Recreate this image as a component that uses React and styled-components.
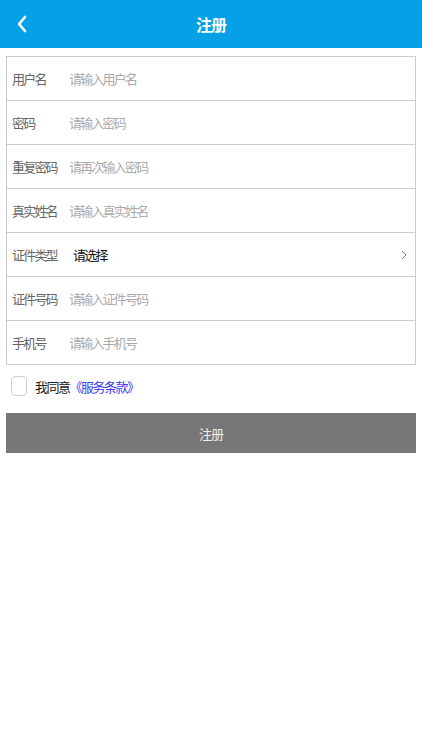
import React from 'react';
import styled, { createGlobalStyle } from 'styled-components';

const GlobalStyle = createGlobalStyle`
  html, body {
    margin: 0;
    padding: 0;
    background: #ffffff;
  }
  body {
    font-family: "Noto Sans CJK SC", "Liberation Sans", sans-serif;
  }
`;

const fields = [
  { label: '用户名', placeholder: '请输入用户名' },
  { label: '密码', placeholder: '请输入密码' },
  { label: '重复密码', placeholder: '请再次输入密码' },
  { label: '真实姓名', placeholder: '请输入真实姓名' },
  { label: '证件类型', select: '请选择' },
  { label: '证件号码', placeholder: '请输入证件号码' },
  { label: '手机号', placeholder: '请输入手机号' },
];

const App = () => {
  return (
    <Page>
      <GlobalStyle />
      <Header>
        <BackButton aria-label="返回">
          <svg width="12" height="18" viewBox="0 0 12 18" fill="none">
            <path d="M9 2L3 9l6 7" stroke="#fff" strokeWidth="2.6" strokeLinecap="round" strokeLinejoin="round" />
          </svg>
        </BackButton>
        <Title>注册</Title>
      </Header>

      <Form>
        {fields.map((f) => (
          <Row key={f.label}>
            <Label>{f.label}</Label>
            {f.select ? (
              <SelectValue>
                <span>{f.select}</span>
                <Chevron>
                  <svg width="6" height="10" viewBox="0 0 6 10" fill="none">
                    <path d="M1 1l4 4-4 4" stroke="#777" strokeWidth="1" />
                  </svg>
                </Chevron>
              </SelectValue>
            ) : (
              <Input placeholder={f.placeholder} />
            )}
          </Row>
        ))}
      </Form>

      <Agree>
        <Checkbox />
        <AgreeText>
          我同意<TermsLink>《服务条款》</TermsLink>
        </AgreeText>
      </Agree>

      <SubmitButton>注册</SubmitButton>
    </Page>
  );
};

const Page = styled.div`
  width: 422px;
  min-height: 750px;
  background: #fff;
`;

const Header = styled.div`
  height: 48px;
  background: #05a0e6;
  display: flex;
  align-items: center;
  justify-content: center;
  position: relative;
`;

const BackButton = styled.div`
  position: absolute;
  left: 16px;
  top: 15px;
  display: flex;
`;

const Title = styled.div`
  color: #fff;
  font-size: 16px;
  font-weight: 700;
  letter-spacing: -1px;
`;

const Form = styled.div`
  margin: 8px 6px 0;
  border: 1px solid #cccccc;
  border-bottom: none;
  display: flex;
  flex-direction: column;
`;

const Row = styled.div`
  height: 43px;
  border-bottom: 1px solid #cccccc;
  display: flex;
  align-items: center;
  padding-left: 5px;
  font-size: 13px;
  letter-spacing: -1.8px;
`;

const Label = styled.div`
  width: 57px;
  flex-shrink: 0;
  color: #666;
`;

const Input = styled.input`
  flex: 1;
  border: none;
  outline: none;
  background: transparent;
  font-family: inherit;
  font-size: inherit;
  letter-spacing: inherit;
  padding: 0;
  color: #333;
  &::placeholder {
    color: #ababab;
  }
`;

const SelectValue = styled.div`
  flex: 1;
  display: flex;
  align-items: center;
  justify-content: space-between;
  padding-left: 4px;
  padding-right: 8px;
  color: #111;
`;

const Chevron = styled.span`
  display: flex;
`;

const Agree = styled.div`
  display: flex;
  align-items: center;
  padding: 10px 11px 0;
  height: 22px;
`;

const Checkbox = styled.div`
  width: 14px;
  height: 18px;
  border: 1px solid #cfcfcf;
  border-radius: 4px;
  margin-right: 8px;
`;

const AgreeText = styled.div`
  font-size: 13px;
  letter-spacing: -1.5px;
  color: #222;
`;

const TermsLink = styled.span`
  color: #3b3bf0;
`;

const SubmitButton = styled.div`
  margin: 16px 6px 0;
  height: 40px;
  background: #777777;
  color: #eeeeee;
  font-size: 13px;
  letter-spacing: -1px;
  display: flex;
  align-items: center;
  justify-content: center;
`;

export default App;
